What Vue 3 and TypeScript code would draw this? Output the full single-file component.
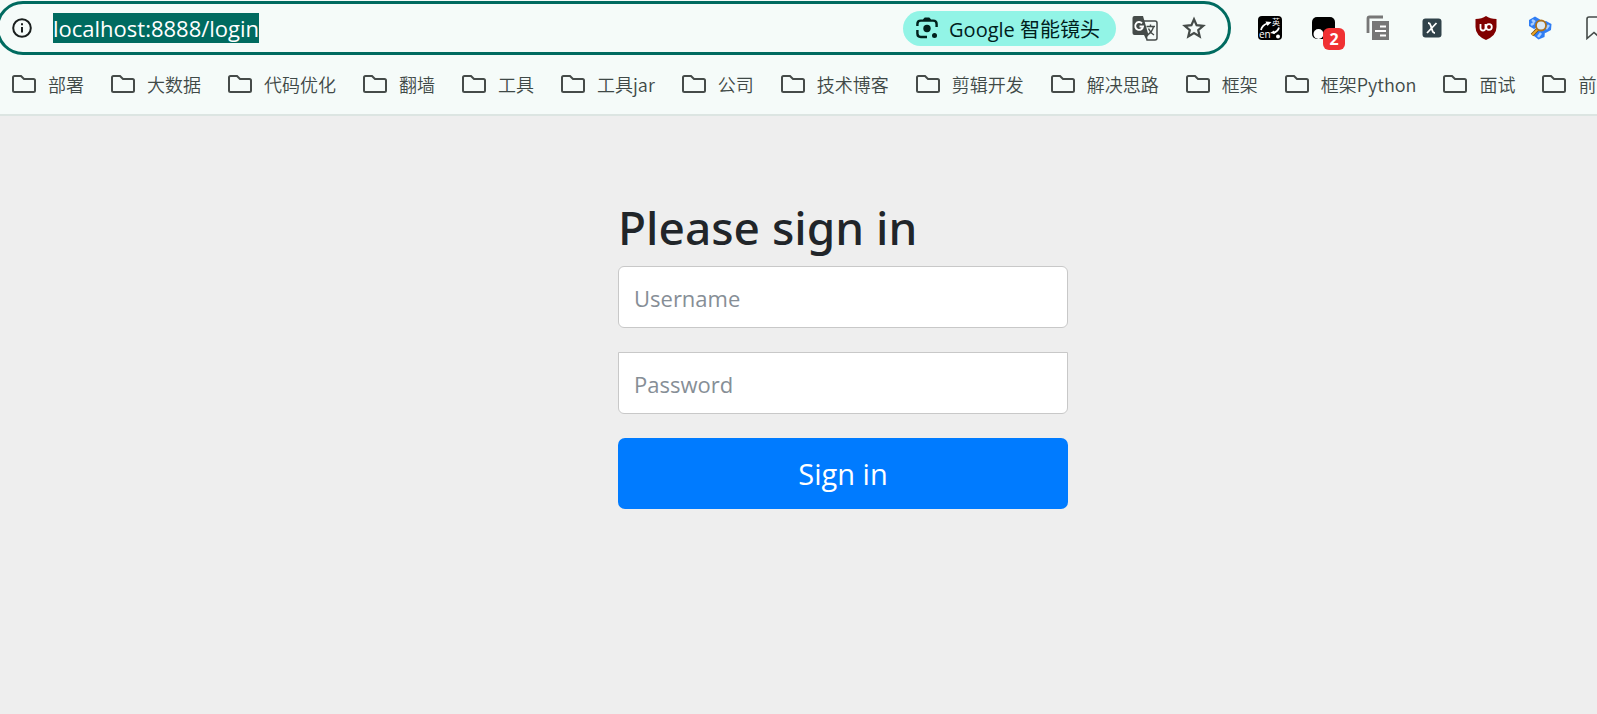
<script setup lang="ts">
import { ref } from 'vue'

const username = ref('')
const password = ref('')
const address = 'localhost:8888/login'
const folders: string[] = [
  '部署', '大数据', '代码优化', '翻墙', '工具', '工具jar', '公司', '技术博客',
  '剪辑开发', '解决思路', '框架', '框架Python', '面试', '前',
]
</script>

<template>
  <div class="browser">
    <header class="chrome">
      <div class="toolbar">
        <div class="omnibox">
          <button class="icon-button" type="button" aria-label="Site information">
            <svg width="20" height="20" viewBox="0 0 20 20" fill="none" stroke="#1a1f1e" stroke-width="2">
              <circle cx="10" cy="10" r="8.8" />
              <path d="M10 9v5.5M10 5.3v2" />
            </svg>
          </button>
          <div class="address"><span class="selected">{{ address }}</span></div>
          <button class="lens" type="button">
            <svg width="22" height="22" viewBox="0 0 22 22" fill="none" stroke="#00201c" stroke-width="2.4">
              <path d="M1.4 9V7q0-3.4 3.4-3.4h12.4q3.4 0 3.4 3.4v3M1.4 13v3.6q0 3.4 3.4 3.4H11" />
              <path d="M7.5 3L8.5 1h5L14.5 3z" fill="#00201c" stroke-width="1" />
              <circle cx="11" cy="11.5" r="3.7" fill="#00201c" stroke="none" />
              <circle cx="18.5" cy="18.5" r="2.5" fill="#00201c" stroke="none" />
            </svg>
            <span>Google 智能镜头</span>
          </button>
          <button class="icon-button translate" type="button" aria-label="Translate">
            <svg width="26" height="26" viewBox="0 0 26 26">
              <path d="M11 6h12q2 0 2 2v15q0 2-2 2h-8z" fill="#f5fbf9" stroke="#454b49" stroke-width="1.5" />
              <path d="M2.5 1h8.5l5.5 19H2.5Q.5 20 .5 18V3Q.5 1 2.5 1z" fill="#454b49" />
              <path d="M12 20h4.5L14 24z" fill="#454b49" />
              <path d="M10 8.3A3.9 3.9 0 1 0 11 11.5H7.5" fill="none" stroke="#fff" stroke-width="1.9" />
              <path d="M14.5 11.5h8.5M18.5 9.5v2M21.5 11.5q-1 5-6 8.5M16.5 13.5q1.5 4 5.5 6.5" fill="none" stroke="#454b49" stroke-width="1.4" />
            </svg>
          </button>
          <button class="icon-button star" type="button" aria-label="Bookmark this page">
            <svg width="24" height="24" viewBox="0 0 24 24" fill="none" stroke="#454b49" stroke-width="2.2">
              <path d="M12 3.2l2.6 6 6.6.6-5 4.3 1.5 6.4L12 17.1l-5.7 3.4 1.5-6.4-5-4.3 6.6-.6z" />
            </svg>
          </button>
        </div>

        <nav class="extensions" aria-label="Extensions">
          <button class="extension" type="button" aria-label="Dictionary">
            <svg width="26" height="26" viewBox="0 0 26 26">
              <rect x="1" y="1" width="24" height="24" rx="4" fill="#000" />
              <text x="2" y="23" font-size="10" fill="#fff">en</text>
              <text x="15" y="10" font-size="8" fill="#fff">英</text>
              <path d="M4 15q1-4.5 6-6.5M22 12.5q-1 4-6 5.5" fill="none" stroke="#fff" stroke-width="1.8" />
              <path d="M8.5 6.5l6 .5-4 4zM17 15.5l-4 2.5 5 1z" fill="#fff" />
              <circle cx="21" cy="21.5" r="2" fill="#fff" />
            </svg>
          </button>
          <button class="extension" type="button" aria-label="Script manager">
            <svg width="26" height="26" viewBox="0 0 26 26">
              <rect x="1" y="2" width="23" height="22" rx="5" fill="#000" />
              <circle cx="7.5" cy="19" r="5" fill="#fff" />
              <circle cx="18.5" cy="19" r="5" fill="#fff" />
            </svg>
            <span class="badge">2</span>
          </button>
          <button class="extension" type="button" aria-label="Copy">
            <svg width="24" height="26" viewBox="0 0 24 26">
              <path d="M2 18V3.5Q2 2 3.5 2H17" fill="none" stroke="#777" stroke-width="2.8" />
              <path d="M6 6h17v19H6z" fill="#777" />
              <path d="M14 11.5h6M9 16h11M14 20.5h6" stroke="#fff" stroke-width="1.8" />
            </svg>
          </button>
          <button class="extension" type="button" aria-label="XPath helper">
            <svg width="20" height="20" viewBox="0 0 20 20">
              <rect x=".5" y=".5" width="19" height="19" rx="3" fill="#30424a" />
              <path d="M6 5q2 0 2.5 2l2 6q.5 2 2.5 2M14.5 5L5 15" fill="none" stroke="#fff" stroke-width="1.8" />
            </svg>
          </button>
          <button class="extension" type="button" aria-label="Content blocker">
            <svg width="22" height="24" viewBox="0 0 22 24">
              <path d="M11 0q4 3 10.5 3v8q0 8.5-10.5 13Q.5 19.5.5 11V3Q7 3 11 0z" fill="#800000" />
              <path d="M5.5 8v4a2.300 2.300 0 0 0 5 0V8" fill="none" stroke="#fff" stroke-width="1.8" />
              <circle cx="14" cy="11" r="2.8" fill="none" stroke="#fff" stroke-width="1.8" />
            </svg>
          </button>
          <button class="extension" type="button" aria-label="Inspector">
            <svg width="24" height="24" viewBox="0 0 24 24">
              <path d="M1 4l6-3.5 5 3V10l-6 3-5-3zM12 7l6-2 5.5 3-.5 6-5.5 3-5.5-3zM6 14l6-2 5 3-.5 6-6 2.5L6 20z" fill="#2f7df4" />
              <path d="M4 4l3 2M3 9l3-2M18 13l3-4M10 21l3-4" stroke="#a9ceff" stroke-width="2.5" />
              <path d="M10 13l-6 6" stroke="#7a5110" stroke-width="3.5" />
              <path d="M10 13l-6 6" stroke="#eca526" stroke-width="2" />
              <circle cx="13" cy="9.5" r="5" fill="#dce9f4" stroke="#ad711b" stroke-width="1.8" />
            </svg>
          </button>
          <button class="reading-list" type="button" aria-label="Reading list">
            <svg width="11" height="24" viewBox="0 0 11 24" fill="none" stroke="#454b49" stroke-width="1.6">
              <path d="M16 1H3Q1 1 1 3v19.5l7-6 7 6" />
            </svg>
          </button>
        </nav>
      </div>

      <nav class="bookmarks" aria-label="Bookmarks">
        <a v-for="folder in folders" :key="folder" class="bookmark" href="#">
          <svg width="24" height="18" viewBox="0 0 24 18" fill="none" stroke="#454b49" stroke-width="2">
            <path d="M2.5 1h6.5l3 3h9.5q1.5 0 1.5 1.5v10q0 1.5-1.5 1.5h-19Q1 17 1 15.5v-13Q1 1 2.5 1z" />
          </svg>
          <span>{{ folder }}</span>
        </a>
      </nav>
    </header>

    <main class="page">
      <form class="sign-in" @submit.prevent>
        <h2>Please sign in</h2>
        <input v-model="username" class="field" type="text" placeholder="Username" aria-label="Username">
        <input v-model="password" class="field password" type="password" placeholder="Password" aria-label="Password">
        <button class="submit" type="submit">Sign in</button>
      </form>
    </main>
  </div>
</template>

<style>
body {
  background: #eee;
}
</style>

<style scoped>
.browser {
  overflow: hidden;
  font-family: "Open Sans", "Noto Sans CJK SC", sans-serif;
}
.browser * {
  box-sizing: border-box;
}
button {
  border: 0;
  padding: 0;
  background: none;
  font-family: inherit;
}
svg {
  display: block;
  flex: none;
}
.chrome {
  background: #f5fbf9;
  border-bottom: 2px solid #dce5e2;
}
.toolbar {
  display: flex;
  height: 56px;
}
.omnibox {
  display: flex;
  flex: 1;
  align-items: center;
  height: 54px;
  margin: 1px 0 0 -4px;
  padding: 0 22px 0 13px;
  border: 3px solid #006b60;
  border-radius: 27px;
}
.address {
  flex: 1;
  margin-left: 21px;
  font-size: 22px;
  line-height: 30px;
}
.selected {
  display: inline-block;
  background: #006b60;
  color: #fff;
}
.lens {
  display: flex;
  align-items: center;
  gap: 11px;
  height: 35px;
  padding: 0 16px 0 13px;
  border-radius: 18px;
  background: #92f4e6;
  color: #00201c;
  font-size: 20px;
}
.translate {
  margin-left: 16px;
}
.star {
  margin-left: 24px;
}
.extensions {
  display: flex;
  align-items: center;
  flex: none;
  padding-left: 12px;
}
.extension {
  position: relative;
  display: flex;
  justify-content: center;
  width: 54px;
}
.badge {
  position: absolute;
  left: 26px;
  top: 13px;
  width: 22px;
  height: 22px;
  border-radius: 6px;
  background: #f03133;
  color: #fff;
  font-size: 16px;
  font-weight: 700;
  line-height: 22px;
}
.reading-list {
  margin-left: 19px;
}
.bookmarks {
  display: flex;
  align-items: center;
  gap: 27px;
  height: 56px;
  margin-bottom: 2px;
  padding-left: 12px;
  font-family: "Noto Sans CJK SC", sans-serif;
  font-size: 18px;
  font-weight: 350;
}
.bookmark {
  display: flex;
  flex: none;
  align-items: center;
  gap: 12px;
  color: #3f4947;
  text-decoration: none;
  white-space: nowrap;
}
.page {
  padding: 82px 0 48px 89px;
}
.sign-in {
  display: flex;
  flex-direction: column;
  gap: 24px;
  width: 450px;
  margin: 0 auto;
}
h2 {
  margin: 0 0 -14px;
  color: #212529;
  font-family: "Noto Sans", "Open Sans", sans-serif;
  font-size: 46px;
  font-weight: 500;
  line-height: 58px;
}
.field {
  width: 100%;
  height: 62px;
  padding: 2px 15px 0;
  border: 1px solid #c8c8c8;
  border-radius: 6px;
  background: #fff;
  font-family: inherit;
  font-size: 22px;
  color: #495057;
}
.field::placeholder {
  color: #868e96;
  opacity: 1;
}
.password {
  border-top-left-radius: 0;
  border-top-right-radius: 0;
}
.submit {
  height: 71px;
  border-radius: 7px;
  background: #007bff;
  color: #fff;
  font-size: 29px;
}
</style>
